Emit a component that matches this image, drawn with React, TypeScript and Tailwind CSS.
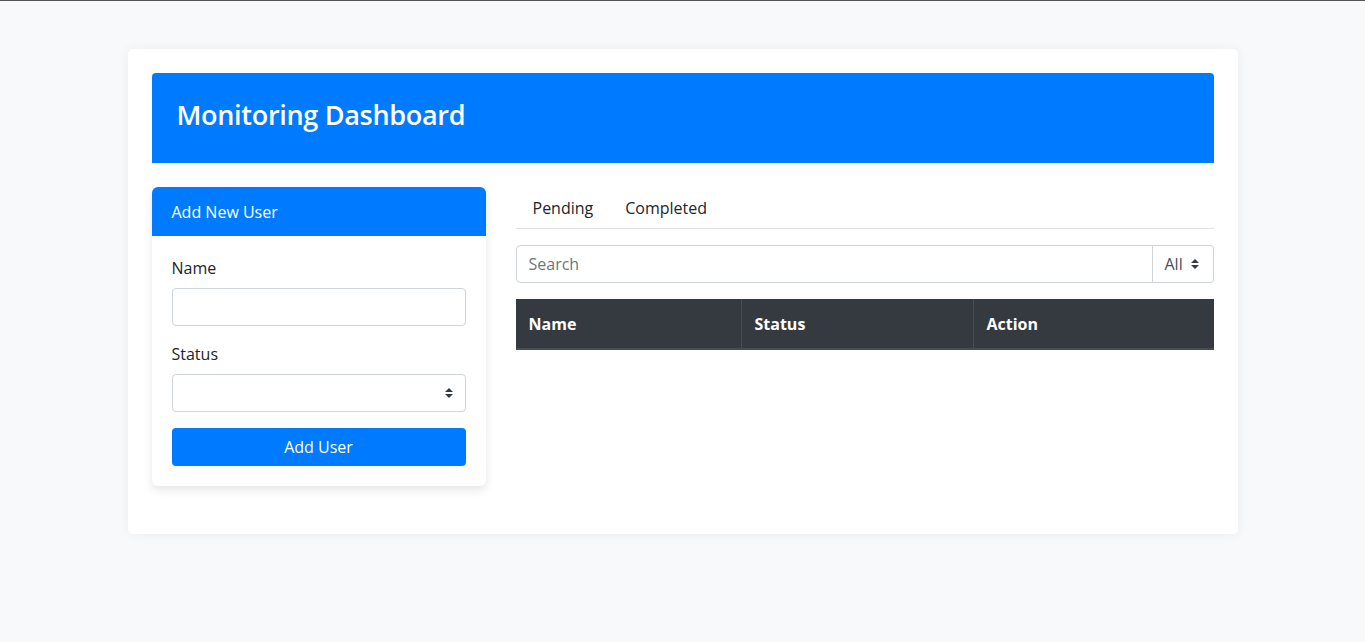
import React from 'react';

const font = { fontFamily: '"Open Sans", "Noto Sans", sans-serif' };

const Arrows = () => (
    <svg width="8" height="10" viewBox="0 0 4 5" className="shrink-0">
        <path fill="#343a40" d="M2 0L0 2h4zm0 5L0 3h4z" />
    </svg>
);

const AddUserCard = () => {
    return (
        <div className="w-[334px] shrink-0 bg-white rounded-[6px] shadow-[0_4px_10px_rgba(0,0,0,0.1)] overflow-hidden">
            {/* card header */}
            <div className="h-[49px] bg-[#007bff] text-white text-[16px] px-5 flex items-center">Add New User</div>
            <div className="p-5 flex flex-col">
                <label className="text-[16px] text-[#212529] leading-6 mb-2">Name</label>
                <input className="h-[38px] border border-[#ced4da] rounded-[4px] px-3 outline-none" />
                <label className="text-[16px] text-[#212529] leading-6 mt-4 mb-2">Status</label>
                <div className="h-[38px] border border-[#ced4da] rounded-[4px] px-3 flex items-center justify-end pr-[12px]">
                    <Arrows />
                </div>
                <button className="mt-4 h-[38px] bg-[#007bff] text-white text-[16px] rounded-[4px]">Add User</button>
            </div>
        </div>
    );
};

const UserTable = () => {
    return (
        <div className="flex-1 flex flex-col">
            {/* tabs */}
            <div className="flex border-b border-[#dee2e6] h-[42px] items-center px-[1px]">
                <span className="px-4 text-[16px] text-[#212529]">Pending</span>
                <span className="px-4 text-[16px] text-[#212529]">Completed</span>
            </div>
            {/* search + filter */}
            <div className="flex mt-4 h-[38px]">
                <div className="flex-1 border border-[#ced4da] rounded-l-[4px] flex items-center px-3 text-[16px] text-[#6c757d]">Search</div>
                <div className="w-[61px] border border-l-0 border-[#ced4da] rounded-r-[4px] flex items-center gap-[8px] pl-3 text-[16px] text-[#495057]">
                    All <Arrows />
                </div>
            </div>
            {/* table head */}
            <div className="mt-4 grid grid-cols-[225px_232px_1fr] bg-[#343a40] text-white font-bold text-[16px] h-[51px] border-b-2 border-[#454d55]">
                <div className="px-[13px] flex items-center">Name</div>
                <div className="px-[13px] flex items-center border-l border-[#454d55]">Status</div>
                <div className="px-[13px] flex items-center border-l border-[#454d55]">Action</div>
            </div>
        </div>
    );
};

export default function App() {
    return (
        <div className="min-h-[642px] bg-[#f8f9fa] border-t border-[#555] pt-12" style={font}>
            <div className="mx-auto w-[1110px] bg-white rounded-[5px] shadow-[0_0_12px_rgba(0,0,0,0.06)] p-6 pb-12">
                <div className="h-[90px] bg-[#007bff] rounded-t-[4px] flex items-center px-[25px] pb-[6px]">
                    <h1 className="text-white text-[27px] font-semibold tracking-[-0.3px]">Monitoring Dashboard</h1>
                </div>
                <div className="flex gap-[30px] mt-6">
                    <AddUserCard />
                    <UserTable />
                </div>
            </div>
        </div>
    );
}
